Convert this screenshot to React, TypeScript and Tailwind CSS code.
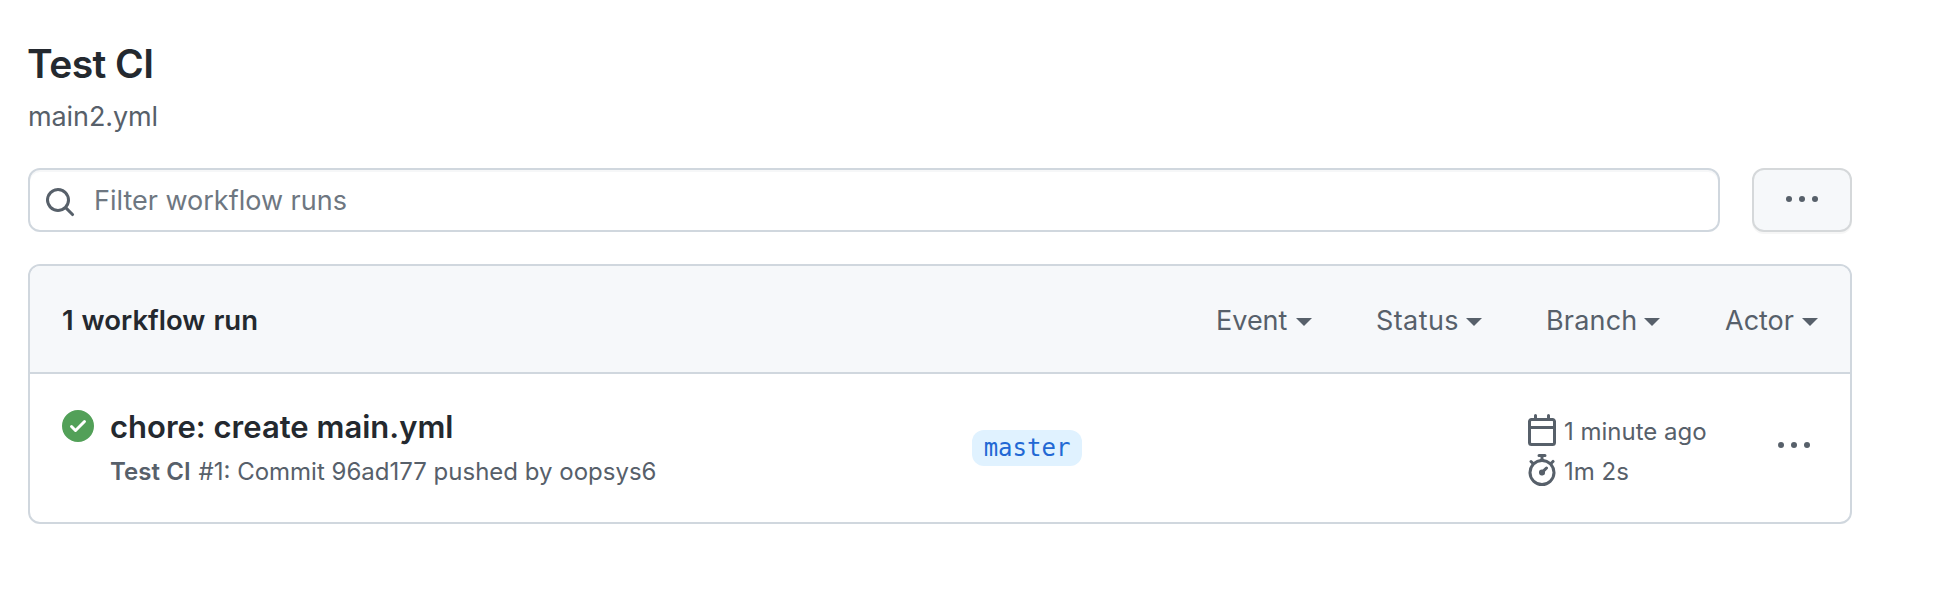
import type { ReactNode } from "react";

function Icon({ children, className = "" }: { children: ReactNode; className?: string }) {
  return (
    <svg viewBox="0 0 16 16" fill="currentColor" aria-hidden="true" className={`block size-8 shrink-0 ${className}`}>
      {children}
    </svg>
  );
}

const SearchIcon = () => (
  <Icon>
    <path fillRule="evenodd" d="M11.5 7a4.499 4.499 0 11-8.998 0A4.499 4.499 0 0111.5 7zm-.82 4.74a6 6 0 111.06-1.06l3.04 3.04a.75.75 0 11-1.06 1.06l-3.04-3.04z" />
  </Icon>
);

const KebabIcon = () => (
  <Icon>
    <circle cx="1.5" cy="7.5" r="1.5" />
    <circle cx="8" cy="7.5" r="1.5" />
    <circle cx="14.5" cy="7.5" r="1.5" />
  </Icon>
);

const CheckIcon = () => (
  <Icon className="mt-px text-[#52a058]">
    <path fillRule="evenodd" d="M8 16A8 8 0 108 0a8 8 0 000 16zm3.78-9.72a.75.75 0 00-1.06-1.06L6.75 9.19 5.28 7.72a.75.75 0 00-1.06 1.06l2 2a.75.75 0 001.06 0l4.5-4.5z" />
  </Icon>
);

const CalendarIcon = () => (
  <Icon>
    <path fillRule="evenodd" d="M4.75 0a.75.75 0 01.75.75V2h5V.75a.75.75 0 011.5 0V2h1.25c.966 0 1.75.784 1.75 1.75v10.5A1.75 1.75 0 0113.25 16H2.75A1.75 1.75 0 011 14.25V3.75C1 2.784 1.784 2 2.75 2H4V.75A.75.75 0 014.75 0zm0 3.5h8.5a.25.25 0 01.25.25V6h-11V3.75a.25.25 0 01.25-.25h2zm-2.25 4v6.75c0 .138.112.25.25.25h10.5a.25.25 0 00.25-.25V7.5h-11z" />
  </Icon>
);

const StopwatchIcon = () => (
  <Icon>
    <path fillRule="evenodd" d="M5.75.75A.75.75 0 016.5 0h3a.75.75 0 010 1.5h-.75v1l-.001.041a6.718 6.718 0 013.464 1.435l.007-.006.75-.75a.75.75 0 111.06 1.06l-.75.75-.006.007a6.75 6.75 0 11-10.548 0L2.72 5.03l-.75-.75a.75.75 0 011.06-1.06l.75.75.007.006A6.718 6.718 0 017.25 2.541a.756.756 0 010-.041v-1H6.5a.75.75 0 01-.75-.75zM8 14.5A5.25 5.25 0 108 4a5.25 5.25 0 000 10.5zm.389-6.7l1.33-1.33a.75.75 0 111.061 1.06L9.45 8.861A1.502 1.502 0 118 7.75c.13 0 .265.017.389.05z" />
  </Icon>
);

const filters = [
  { label: "Event", className: "w-[96px] ml-px" },
  { label: "Status", className: "w-[106px] tracking-[0.4px]" },
  { label: "Branch", className: "w-[114px] tracking-[0.2px]" },
  { label: "Actor", className: "w-[93px] ml-px" },
];

export default function App() {
  return (
    <main className="h-[608px] w-[1944px] overflow-hidden bg-white pt-10 pr-[92px] pl-7 font-['Inter',sans-serif] text-[27px] text-[#57606a]">
      <h1 className="-ml-px h-12 text-[39px] leading-[48px] font-semibold tracking-[-0.55px] text-[#24292f]">Test CI</h1>
      <p className="mt-2 h-10 leading-[41px] tracking-[-0.1px]">main2.yml</p>

      <div className="mt-8 flex gap-8">
        <div className="flex h-16 flex-1 items-center rounded-xl border-2 border-[#d0d7de] pl-3.5 inset-shadow-[0_2px_0_rgba(208,215,222,0.2)]">
          <span className="pt-1">
            <SearchIcon />
          </span>
          <span className="ml-[18px] pt-0.5 leading-10 text-[#6e7781]">Filter workflow runs</span>
        </div>
        <button className="flex h-16 w-[100px] justify-center rounded-xl border-2 border-[#d5d8da] bg-[#f6f8fa] pt-3.5 shadow-[0_2px_0_rgba(27,31,36,0.04)]">
          <KebabIcon />
        </button>
      </div>

      <section className="mt-8 overflow-hidden rounded-xl border-2 border-[#d0d7de]">
        <header className="flex h-[108px] items-center justify-between border-b-2 border-[#d0d7de] bg-[#f6f8fa] px-8 pt-0.5">
          <h2 className="text-[27.5px] leading-10 font-semibold tracking-[0.02px] text-[#24292f] [word-spacing:1px]">1 workflow run</h2>
          <div className="flex gap-16">
            {filters.map((f) => (
              <button key={f.label} className={`flex h-10 items-center justify-between ${f.className}`}>
                <span className="pt-0.5 leading-10">{f.label}</span>
                <svg viewBox="0 0 16 8" fill="currentColor" className="mt-1 h-2 w-4 shrink-0" aria-hidden="true">
                  <path d="M0 0h16L8 8z" />
                </svg>
              </button>
            ))}
          </div>
        </header>

        <div className="flex h-[148px] pt-[35px] pr-10 pl-8">
          <CheckIcon />
          <div className="ml-4 w-[862px]">
            <h3 className="text-[31px] leading-9 font-semibold text-[#24292f]">chore: create main.yml</h3>
            <p className="mt-[11px] text-[24px] leading-8">
              <span className="mr-px font-semibold tracking-[0.08px]">Test CI</span> #1: Commit 96ad177 pushed by oopsys6
            </p>
          </div>
          <span className="mt-[21px] flex h-9 w-[110px] items-center justify-center rounded-xl bg-[#e0f2ff] font-['DejaVu_Sans_Mono',monospace] text-[24px] text-[#2268d4]">
            master
          </span>
          <div className="mt-[5px] ml-[444px] flex w-[252px] flex-col gap-2 text-[24px]">
            <div className="flex h-8 gap-1.5">
              <CalendarIcon />
              <span className="leading-[35px]">1 minute ago</span>
            </div>
            <div className="flex h-8 gap-1.5">
              <StopwatchIcon />
              <span className="leading-[35px]">1m 2s</span>
            </div>
          </div>
          <button className="mt-[21px] h-8">
            <KebabIcon />
          </button>
        </div>
      </section>
    </main>
  );
}
